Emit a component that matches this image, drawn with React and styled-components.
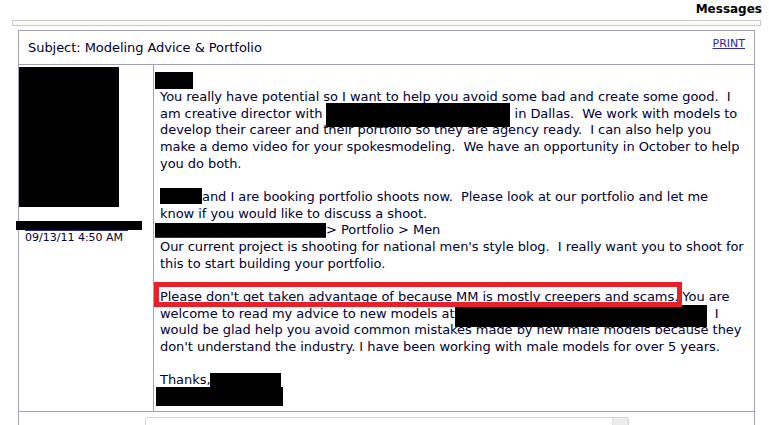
import React from "react";
import styled, { createGlobalStyle } from "styled-components";

const Global = createGlobalStyle`
  html, body { margin: 0; padding: 0; background: #fff; overflow: hidden; }
  body { font-family: "DejaVu Sans", Verdana, sans-serif; color: #000033; }
`;

const Page = styled.div`
  width: 769px;
  height: 425px;
  overflow: hidden;
`;

const Header = styled.div`
  height: 20px;
  display: flex;
  justify-content: flex-end;
  align-items: flex-start;
  padding-right: 7px;
  box-sizing: border-box;
`;

const Title = styled.h1`
  margin: 2px 0 0;
  font-size: 12px;
  font-weight: bold;
  line-height: 14px;
  color: #000;
`;

const TopBar = styled.div`
  margin: 0 8px 0 12px;
  height: 4px;
  border: 1px solid #c9c9c9;
  background: #fbfbfb;
`;

const Panel = styled.div`
  margin: 4px 0 0 18px;
  width: 737px;
  box-sizing: border-box;
  border: 1px solid #a2a2b2;
`;

const SubjectRow = styled.div`
  height: 33px;
  border-bottom: 1px solid #a2a2b2;
  display: flex;
  align-items: center;
  justify-content: space-between;
  padding: 0 9px 0 9px;
`;

const Subject = styled.div`
  font-size: 13px;
  letter-spacing: -0.05px;
  color: #000033;
`;

const PrintLink = styled.a`
  font-size: 11px;
  color: #2b2b9a;
  text-decoration: underline;
  margin-bottom: 8px;
`;

const BodyRow = styled.div`
  display: flex;
  border-bottom: 1px solid #a2a2b2;
`;

const SideCol = styled.div`
  width: 134px;
  flex: none;
  border-right: 1px solid #a2a2b2;
  display: flex;
  flex-direction: column;
  padding-top: 2px;
`;

const Photo = styled.div`
  width: 100px;
  height: 140px;
  background: #000;
`;

const NameBar = styled.div`
  margin: 14px 0 0 -3px;
  width: 126px;
  height: 9px;
  background: #000;
`;

const NameUnderline = styled.div`
  margin-left: 6px;
  width: 103px;
  height: 1px;
  background: #2b2b9a;
`;

const DateText = styled.div`
  margin-left: 6px;
  font-size: 11px;
  line-height: 13px;
  color: #000033;
`;

const MsgCol = styled.div`
  flex: 1;
  padding: 7px 0 6px 6px;
  font-size: 13px;
  letter-spacing: -0.05px;
  line-height: 16.67px;
  color: #000033;
`;

const SenderBar = styled.div`
  margin-left: -5px;
  width: 38px;
  height: 17px;
  background: #000;
`;

const Line = styled.div`
  white-space: pre;
  height: 16.67px;
`;

const Redact = styled.span`
  display: inline-block;
  vertical-align: top;
  background: #000;
  width: ${(p) => p.$w}px;
  height: ${(p) => p.$h}px;
  margin-top: ${(p) => -p.$up}px;
  margin-bottom: ${(p) => p.$up + 16 - p.$h}px;
  margin-left: ${(p) => p.$ml || 0}px;
  border-bottom: ${(p) => (p.$link ? "1px solid #2b2b9a" : "none")};
  box-sizing: border-box;
`;

const Highlight = styled.span`
  position: relative;
  &::after {
    content: "";
    position: absolute;
    left: -6px;
    right: -4px;
    top: -7px;
    bottom: -3px;
    border: 5px solid #e8202a;
    pointer-events: none;
  }
`;

const FooterRow = styled.div`
  display: flex;
  justify-content: center;
  padding-top: 5px;
  height: 60px;
`;

const ReplyBox = styled.div`
  width: 484px;
  height: 60px;
  box-sizing: border-box;
  border: 1px solid #d6d6d6;
  border-radius: 2px;
  display: flex;
  justify-content: flex-end;
`;

const ScrollTrack = styled.div`
  width: 15px;
  background: #ececec;
  border-left: 1px solid #e0e0e0;
`;

export default function App() {
  return (
    <Page>
      <Global />
      <Header>
        <Title>Messages</Title>
      </Header>
      <TopBar />
      <Panel>
        <SubjectRow>
          <Subject>Subject: Modeling Advice &amp; Portfolio</Subject>
          <PrintLink href="#">PRINT</PrintLink>
        </SubjectRow>
        <BodyRow>
          <SideCol>
            <Photo />
            <NameBar />
            <NameUnderline />
            <DateText>09/13/11 4:50 AM</DateText>
          </SideCol>
          <MsgCol>
            <SenderBar />
            <Line>You really have potential so I want to help you avoid some bad and create some good.  I</Line>
            <Line>
              {"am creative director with "}
              <Redact $w={184} $h={24} $up={3} />
              {" in Dallas.  We work with models to"}
            </Line>
            <Line>develop their career and their portfolio so they are agency ready.  I can also help you</Line>
            <Line>make a demo video for your spokesmodeling.  We have an opportunity in October to help</Line>
            <Line>you do both.</Line>
            <Line> </Line>
            <Line>
              <Redact $w={42} $h={16} $up={1} />
              {"and I are booking portfolio shoots now.  Please look at our portfolio and let me"}
            </Line>
            <Line>know if you would like to discuss a shoot.</Line>
            <Line>
              <Redact $w={171} $h={15} $up={-1} $ml={-5} $link />
              {"> Portfolio > Men"}
            </Line>
            <Line>Our current project is shooting for national men's style blog.  I really want you to shoot for</Line>
            <Line>this to start building your portfolio.</Line>
            <Line> </Line>
            <Line>
              <Highlight>Please don't get taken advantage of because MM is mostly creepers and scams.</Highlight>
              {" You are"}
            </Line>
            <Line>
              {"welcome to read my advice to new models at"}
              <Redact $w={252} $h={22} $up={1} />
              {"  I"}
            </Line>
            <Line>would be glad help you avoid common mistakes made by new male models because they</Line>
            <Line>don't understand the industry. I have been working with male models for over 5 years.</Line>
            <Line> </Line>
            <Line>
              {"Thanks,"}
              <Redact $w={71} $h={14} $up={-1} />
            </Line>
            <Line>
              <Redact $w={127} $h={19} $up={2} $ml={-4} />
            </Line>
          </MsgCol>
        </BodyRow>
        <FooterRow>
          <ReplyBox>
            <ScrollTrack />
          </ReplyBox>
        </FooterRow>
      </Panel>
    </Page>
  );
}
